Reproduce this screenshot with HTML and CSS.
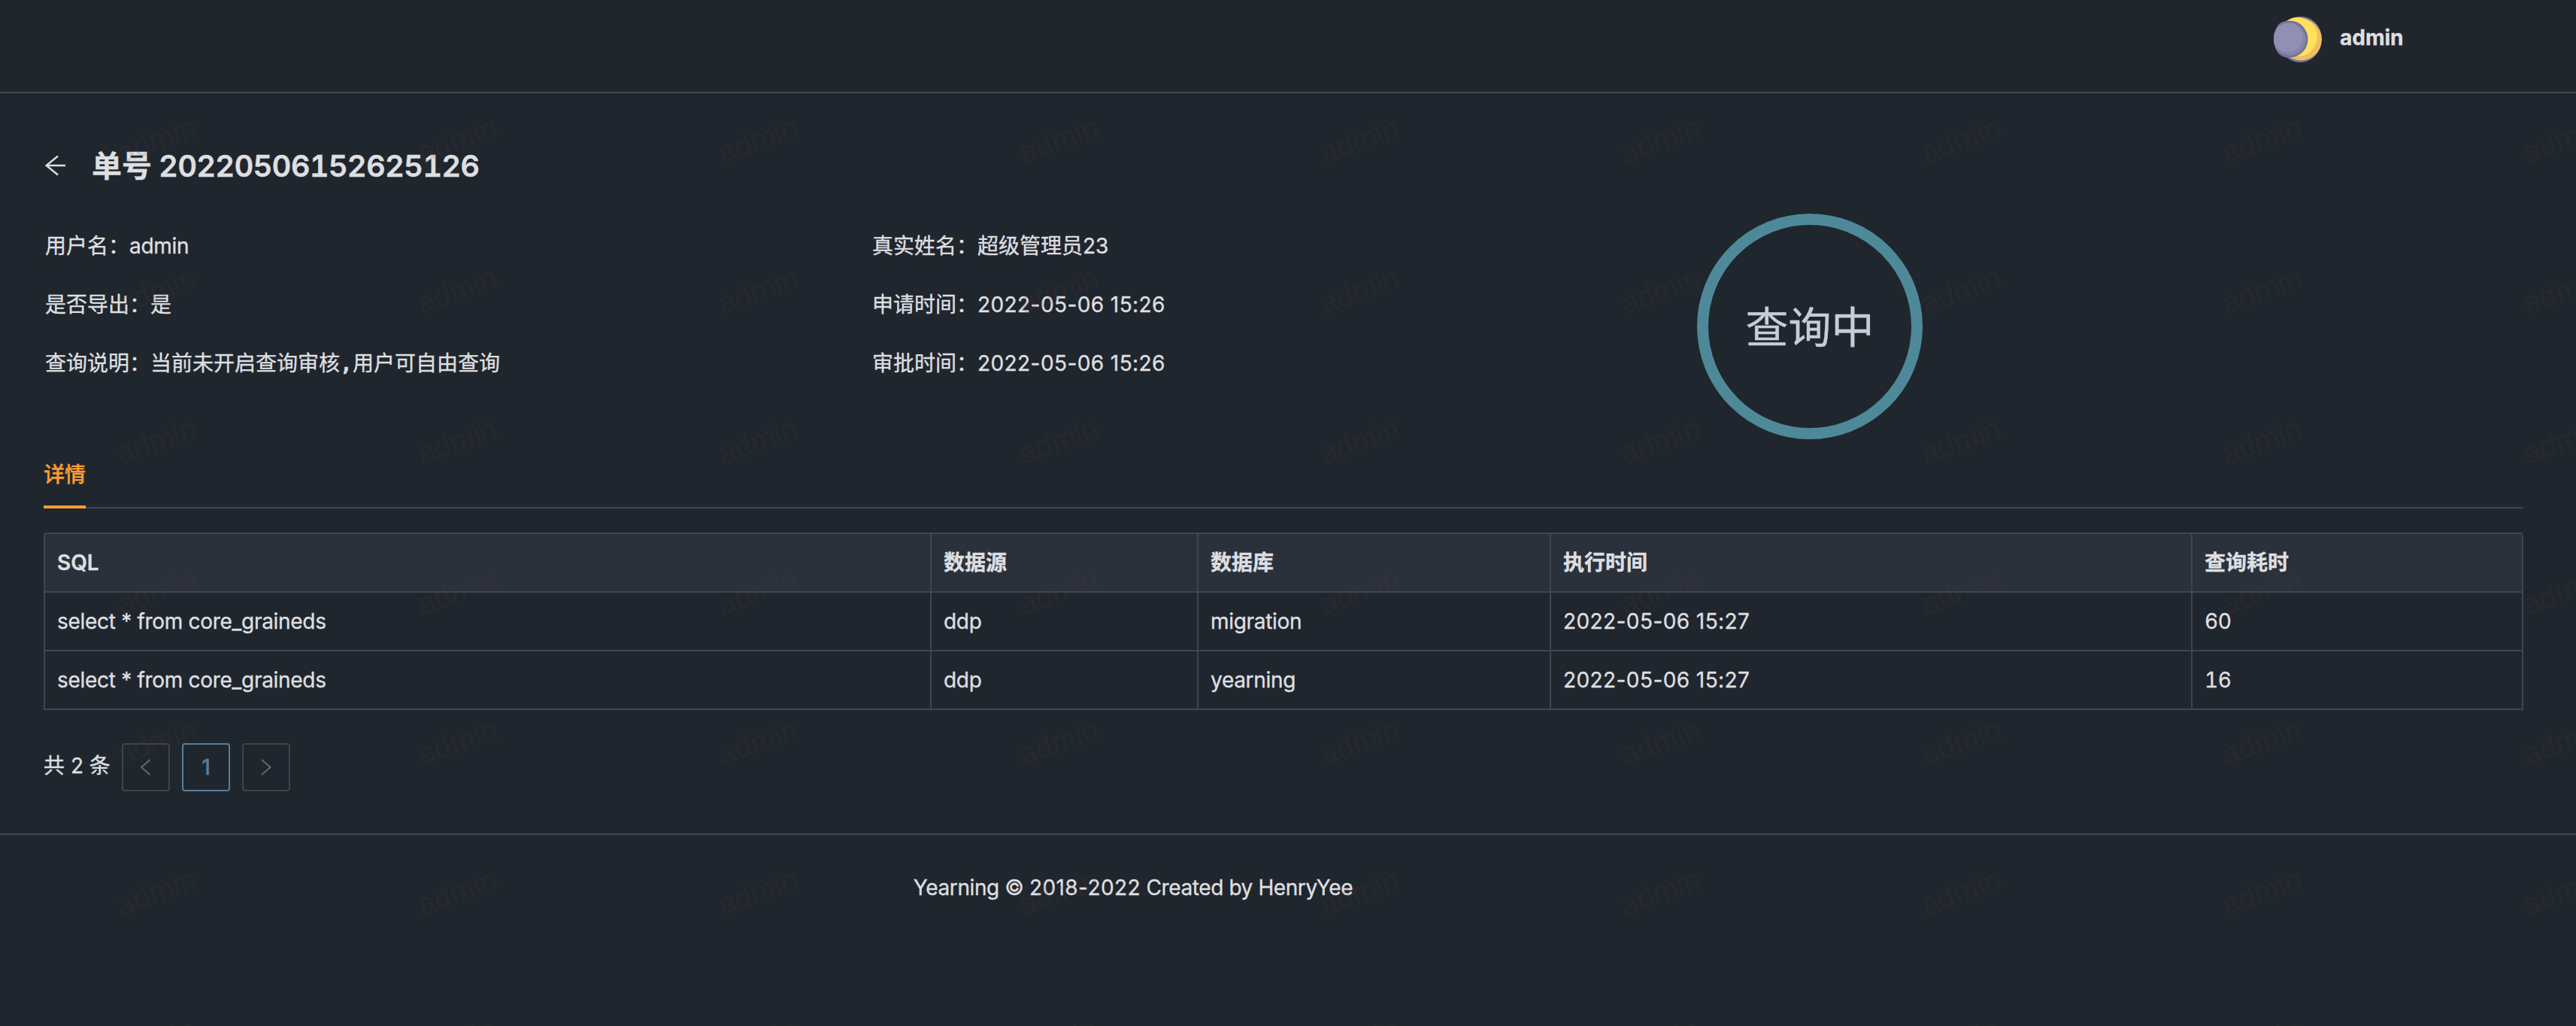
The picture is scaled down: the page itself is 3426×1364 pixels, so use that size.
FILE: index.html
```html
<!DOCTYPE html>
<html lang="zh-CN">
<head>
<meta charset="utf-8">
<title>Yearning</title>
<link rel="stylesheet" href="styles.css">
</head>
<body>
<header class="topbar">
  <svg class="avatar" viewBox="0 0 64 64" aria-hidden="true">
    <defs><clipPath id="avatar-clip"><circle cx="32" cy="32" r="32"/></clipPath></defs>
    <g clip-path="url(#avatar-clip)">
      <circle cx="36" cy="32.500" r="30.500" fill="#74729b"/>
      <circle cx="21" cy="32" r="24.500" fill="#74729b"/>
      <circle cx="36" cy="32.500" r="28" fill="#f2bc62"/>
      <circle cx="32" cy="29" r="26" fill="#ffe15c"/>
      <circle cx="21" cy="32" r="24.500" fill="#74729b"/>
      <circle cx="21" cy="32" r="21.500" fill="#8785a8"/>
      <circle cx="19" cy="30" r="19.500" fill="#918fb2"/>
    </g>
  </svg>
  <span class="user">admin</span>
</header>
<main class="content">
  <div class="title-row">
    <svg class="back" viewBox="0 0 28 28"><path d="M27 14H1.500M17 1.500L1.500 14L17 26.500"/></svg>
    <h1 class="title">单号 <span class="order-id">20220506152625126</span></h1>
  </div>
  <section class="summary">
    <div class="facts">
      <div>用户名：<span class="value">admin</span></div>
      <div>是否导出：是</div>
      <div>查询说明：当前未开启查询审核<span class="comma">,</span>用户可自由查询</div>
    </div>
    <div class="facts">
      <div>真实姓名：超级管理员23</div>
      <div>申请时间：<span class="date">2022-05-06 15:26</span></div>
      <div>审批时间：<span class="date">2022-05-06 15:26</span></div>
    </div>
    <div class="status">查询中</div>
  </section>
  <nav class="tabs"><span class="tab">详情</span></nav>
  <table class="records">
    <colgroup><col class="c1"><col class="c2"><col class="c3"><col class="c4"><col class="c5"></colgroup>
    <thead><tr><th>SQL</th><th>数据源</th><th>数据库</th><th>执行时间</th><th>查询耗时</th></tr></thead>
    <tbody>
      <tr><td>select * from core_graineds</td><td>ddp</td><td>migration</td><td class="date">2022-05-06 15:27</td><td class="cost">60</td></tr>
      <tr><td>select * from core_graineds</td><td>ddp</td><td>yearning</td><td class="date">2022-05-06 15:27</td><td class="cost">16</td></tr>
    </tbody>
  </table>
  <div class="pager">
    <span class="total">共 2 条</span>
    <span class="page"><svg viewBox="0 0 24 24"><path d="M17.500 2L6 12L17.500 22"/></svg></span>
    <span class="page current">1</span>
    <span class="page"><svg viewBox="0 0 24 24"><path d="M6 2L17.500 12L6 22"/></svg></span>
  </div>
</main>
<footer class="footer">Yearning © <span class="date">2018-2022</span> Created by HenryYee</footer>
<svg class="watermark" aria-hidden="true">
  <defs>
    <pattern id="mark" width="400" height="200" patternUnits="userSpaceOnUse">
      <text x="-50" y="10" transform="translate(205 67) rotate(-20)">admin</text>
    </pattern>
  </defs>
  <rect width="100%" height="100%" fill="url(#mark)"/>
</svg>
</body>
</html>
```
FILE: styles.css
```css
* { box-sizing: border-box; }

body {
  position: relative;
  margin: 0;
  height: 1364px;
  overflow: hidden;
  background: #20262d;
  color: #dedfe0;
  font: 400 28px/44px Inter, "Noto Sans CJK SC", sans-serif;
  -webkit-text-stroke: 0.35px;
}

.topbar {
  display: flex;
  align-items: flex-start;
  height: 124px;
  padding: 20px 0 0 3024px;
  background: #21262d;
  border-bottom: 2px solid #3f4651;
}

.avatar { width: 64px; height: 64px; margin-right: 24px; }
.user { padding-top: 8px; font-weight: 700; }

.content { height: 984px; padding: 64px 70px 0 58px; }

.title-row { display: flex; align-items: center; height: 64px; padding-left: 2px; }
.back { width: 28px; height: 28px; margin-right: 34px; fill: none; stroke: #dedfe0; stroke-width: 2.4; }
.title { margin: 0; font-size: 40px; line-height: 65px; font-weight: 600; word-spacing: -1px; }
.order-id { font-feature-settings: "tnum"; letter-spacing: -0.8px; }

.summary {
  display: grid;
  grid-template-columns: 1100px 1097px 300px;
  height: 332px;
  padding: 32px 0 0 2px;
}
.facts { display: flex; flex-direction: column; gap: 34px; padding-top: 21px; }
.value { letter-spacing: -0.3px; }
.comma { font-family: "DejaVu Sans Mono", monospace; font-weight: 700; }
.status {
  width: 300px;
  height: 300px;
  border: 15px solid #4e8999;
  border-radius: 50%;
  color: #c5ced8;
  font-size: 57px;
  line-height: 274px;
  text-align: center;
}

.tabs { display: flex; height: 92px; border-bottom: 2px solid #3f4651; }
.tab {
  height: 92px;
  padding-top: 25px;
  border-bottom: 4px solid #f79d34;
  color: #f79d34;
  font-weight: 500;
}

.records {
  width: 3298px;
  margin-top: 32px;
  table-layout: fixed;
  border-collapse: separate;
  border-spacing: 0;
  border: solid #3f4651;
  border-width: 2px 0 0 2px;
  border-radius: 4px 4px 0 0;
}
.records th, .records td {
  height: 78px;
  padding: 0 16px;
  border: solid #3f4651;
  border-width: 0 2px 2px 0;
  text-align: left;
  font-weight: 400;
  letter-spacing: -0.3px;
}
.records th { background: #2b313b; font-weight: 600; letter-spacing: 0; }
.records th:last-child { border-top-right-radius: 4px; }
.records .date, .date { letter-spacing: 0.42px; }
.records .cost { font-feature-settings: "tnum"; }
.c1 { width: 1179px; }
.c2 { width: 355px; }
.c3 { width: 469px; }
.c4 { width: 853px; }
.c5 { width: 440px; }

.pager { display: flex; gap: 16px; margin-top: 44px; }
.total { width: 88px; padding-top: 8px; white-space: nowrap; }
.page {
  display: flex;
  align-items: center;
  justify-content: center;
  width: 64px;
  height: 64px;
  border: 2px solid #434343;
  border-radius: 4px;
}
.page svg { width: 24px; height: 24px; fill: none; stroke: #66696e; stroke-width: 2; }
.page.current { border-color: #577e9b; color: #577e9b; font-weight: 500; }

.footer {
  height: 256px;
  padding: 48px 412px 0 0;
  border-top: 2px solid #3f4651;
  text-align: center;
  letter-spacing: -0.4px;
}

.watermark {
  position: absolute;
  top: 124px;
  left: 0;
  width: 100%;
  height: 1240px;
  pointer-events: none;
}
.watermark text {
  font: 400 40px "Liberation Sans", sans-serif;
  fill: #543242;
  fill-opacity: 0.14;
  -webkit-text-stroke: 0;
}
```
